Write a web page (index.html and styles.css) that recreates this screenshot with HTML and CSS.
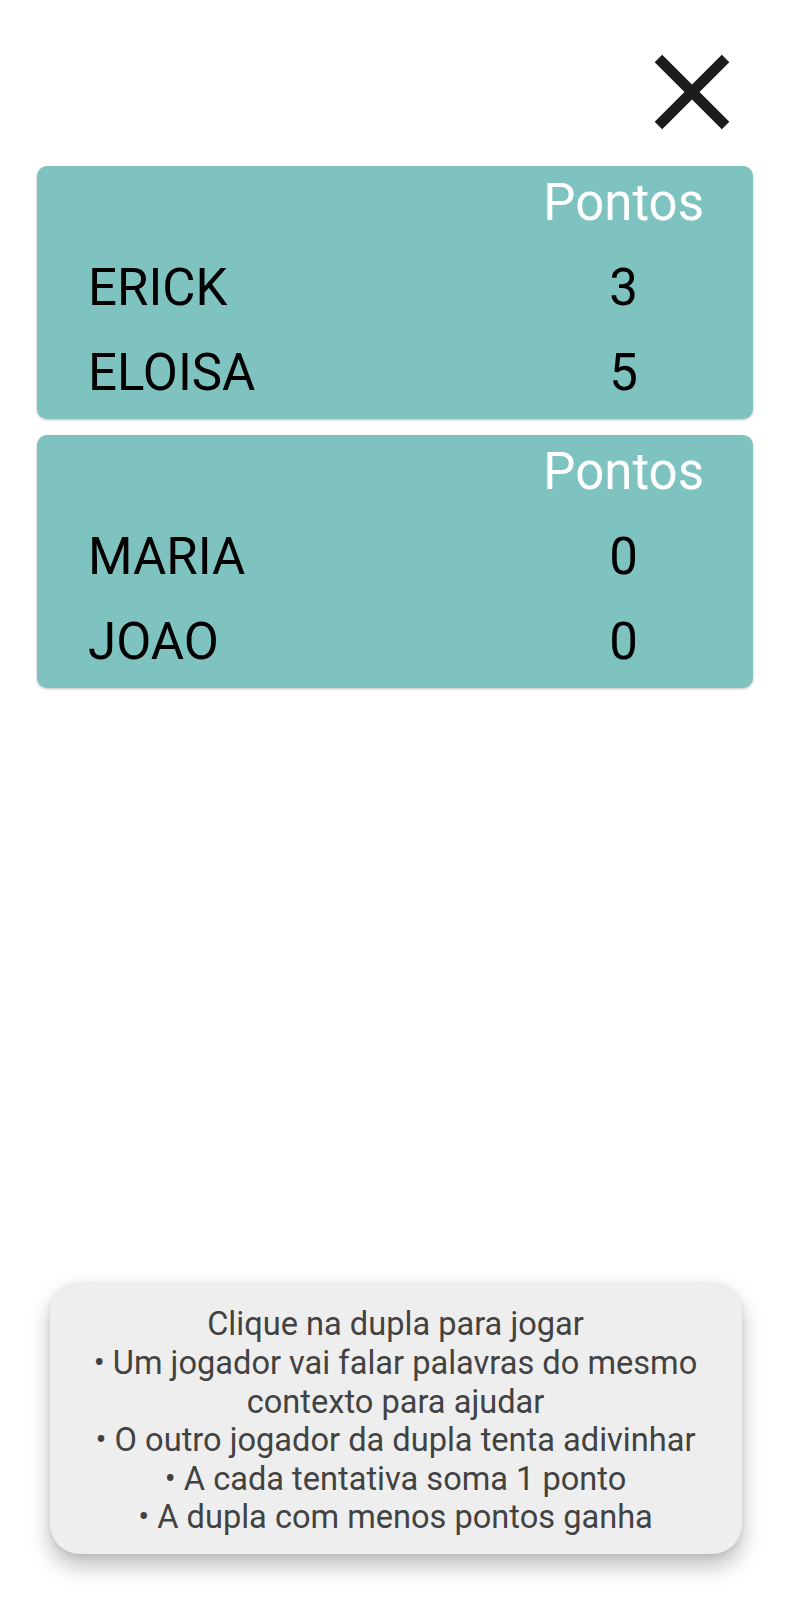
FILE: index.html
```html
<!DOCTYPE html>
<html lang="pt">
<head>
<meta charset="utf-8">
<title>Placar</title>
<link rel="stylesheet" href="styles.css">
</head>
<body>
<div class="page">
  <header class="topbar">
    <button class="close" aria-label="Fechar">
      <svg viewBox="0 0 24 24" width="128" height="128" aria-hidden="true">
        <path d="M19 6.41L17.59 5 12 10.59 6.41 5 5 6.41 10.59 12 5 17.59 6.41 19 12 13.41 17.59 19 19 17.59 13.41 12z"/>
      </svg>
    </button>
  </header>

  <main class="teams">
    <section class="team">
      <div class="cell"></div>
      <div class="cell head">Pontos</div>
      <div class="cell name">ERICK</div>
      <div class="cell pts">3</div>
      <div class="cell name">ELOISA</div>
      <div class="cell pts">5</div>
    </section>
    <section class="team">
      <div class="cell"></div>
      <div class="cell head">Pontos</div>
      <div class="cell name">MARIA</div>
      <div class="cell pts">0</div>
      <div class="cell name">JOAO</div>
      <div class="cell pts">0</div>
    </section>
  </main>

  <footer class="rules">
    Clique na dupla para jogar<br>
    • Um jogador vai falar palavras do mesmo contexto para ajudar<br>
    • O outro jogador da dupla tenta adivinhar<br>
    • A cada tentativa soma 1 ponto<br>
    • A dupla com menos pontos ganha
  </footer>
</div>
</body>
</html>
```

FILE: styles.css
```css
* { box-sizing: border-box; }

html, body {
  margin: 0;
  padding: 0;
  background: #ffffff;
}

body {
  font-family: Roboto, "Noto Sans", "Liberation Sans", sans-serif;
}

.page {
  min-height: 1600px;
  display: flex;
  flex-direction: column;
}

.topbar {
  display: flex;
  justify-content: flex-end;
  padding: 28px 35px 0 0;
}

.close {
  border: 0;
  background: transparent;
  padding: 0;
  margin: 0;
  width: 128px;
  height: 128px;
  display: block;
  cursor: pointer;
}

.close svg {
  display: block;
  fill: #1c1c1c;
}

.teams {
  display: flex;
  flex-direction: column;
  gap: 16px;
  margin: 10px 38px 0 37px;
}

.team {
  background: #7fc3c0;
  border-radius: 10px;
  box-shadow: 0 1px 3px rgba(0, 0, 0, 0.18), 0 1px 2px rgba(0, 0, 0, 0.08);
  display: grid;
  grid-template-columns: 1fr auto;
  row-gap: 25px;
  padding: 7px 49px 16px 51px;
  font-size: 51px;
  line-height: 60px;
}

.cell {
  height: 60px;
  white-space: nowrap;
}

.head {
  color: #ffffff;
  text-align: center;
}

.name {
  color: #000000;
}

.pts {
  color: #000000;
  text-align: center;
}

.rules {
  margin: auto auto 46px auto;
  width: 692px;
  background: #eeeeee;
  border-radius: 30px;
  box-shadow: 0 12px 22px rgba(0, 0, 0, 0.26), 0 2px 6px rgba(0, 0, 0, 0.08);
  padding: 23px 18px 17px 18px;
  text-align: center;
  color: #424242;
  font-size: 32.6px;
  line-height: 38.6px;
}
```
